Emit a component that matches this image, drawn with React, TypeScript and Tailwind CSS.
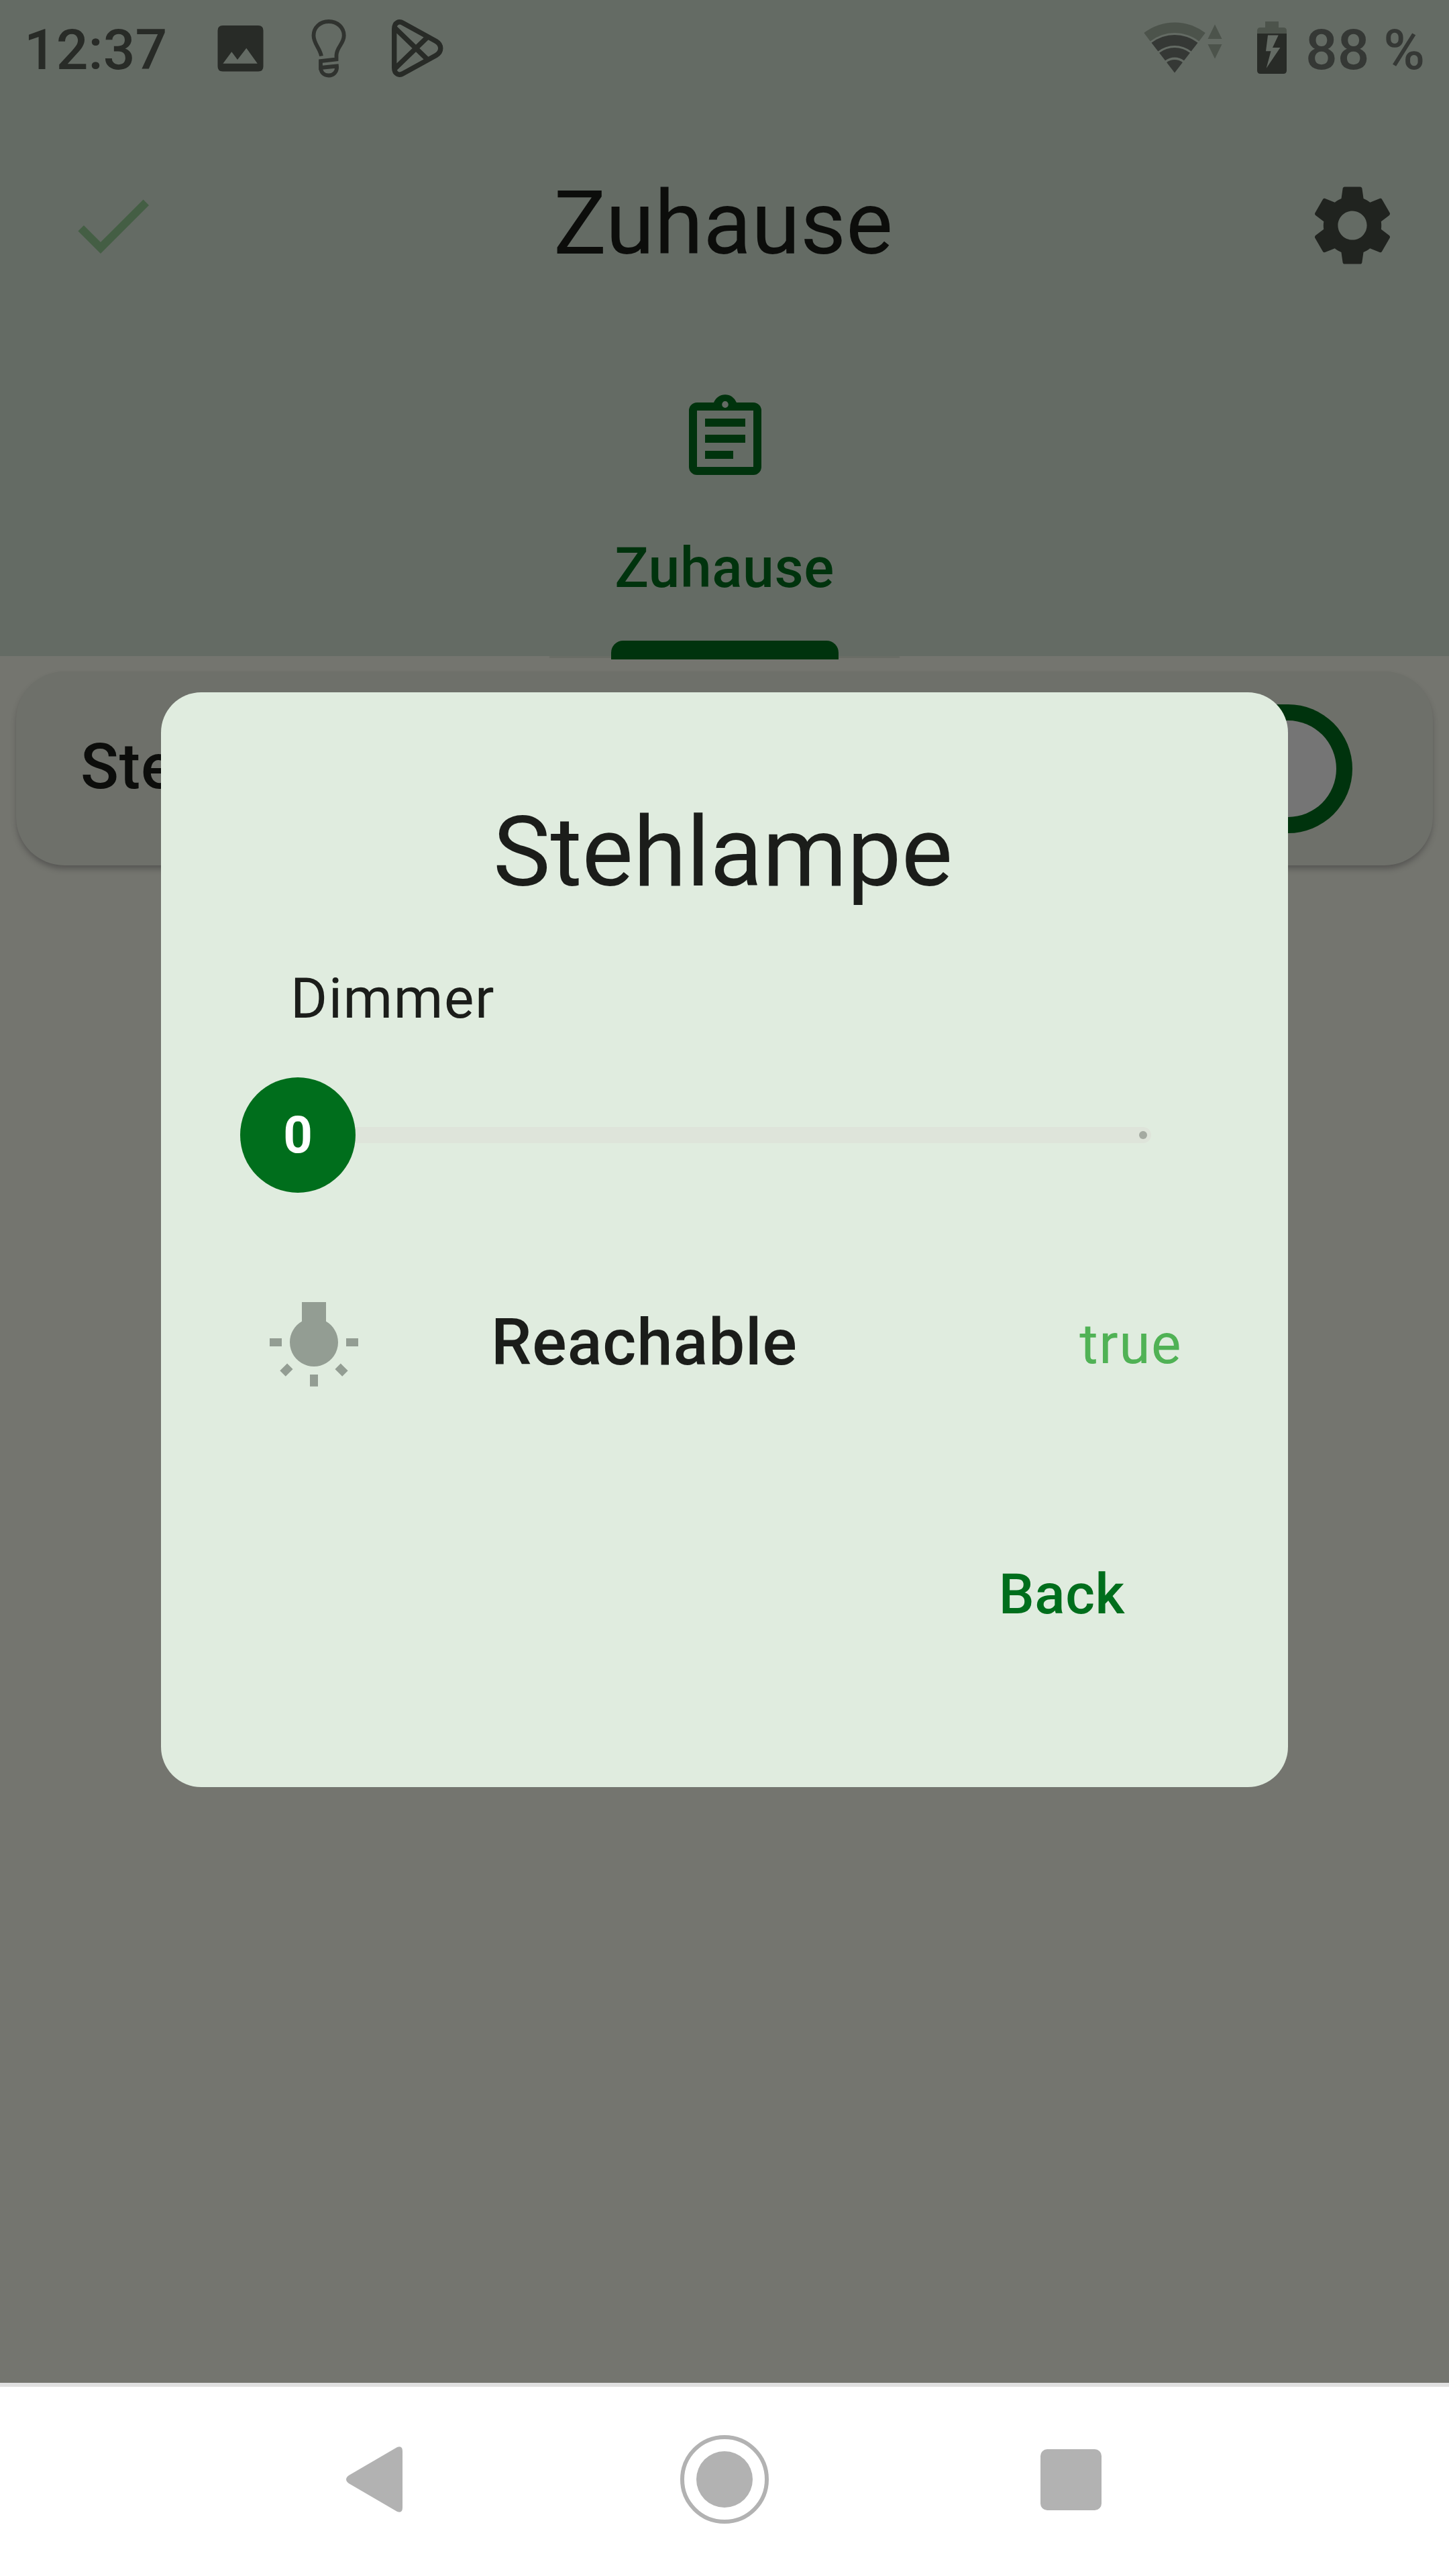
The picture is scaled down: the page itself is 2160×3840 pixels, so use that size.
import React from "react";

const GEAR =
  "M19.14 12.94c.04-.3.06-.61.06-.94 0-.32-.02-.64-.07-.94l2.03-1.58c.18-.14.23-.41.12-.61l-1.92-3.32c-.12-.22-.37-.29-.59-.22l-2.39.96c-.5-.38-1.03-.7-1.62-.94L14.4 2.81c-.04-.24-.24-.41-.48-.41h-3.84c-.24 0-.43.17-.47.41L9.25 5.35C8.66 5.59 8.12 5.92 7.63 6.29L5.24 5.33c-.22-.08-.47 0-.59.22L2.74 8.87c-.12.21-.08.47.12.61l2.03 1.58c-.05.3-.09.63-.09.94s.02.64.07.94l-2.03 1.58c-.18.14-.23.41-.12.61l1.92 3.32c.12.22.37.29.59.22l2.39-.96c.5.38 1.03.7 1.62.94l.36 2.54c.05.24.24.41.48.41h3.84c.24 0 .44-.17.47-.41l.36-2.54c.59-.24 1.13-.56 1.62-.94l2.39.96c.22.08.47 0 .59-.22l1.92-3.32c.12-.22.07-.47-.12-.61l-2.01-1.58zM12 15.6c-1.98 0-3.6-1.62-3.6-3.6s1.62-3.6 3.6-3.6 3.6 1.62 3.6 3.6-1.62 3.6-3.6 3.6z";

const LAMP =
  "M3.55 18.54l1.41 1.41 1.8-1.79-1.41-1.41-1.8 1.79zM11 22.45V19.5h2v2.95h-2zM4 10.5H1v2h3v-2zm11-4.19V1.5H9v4.81C7.21 7.35 6 9.28 6 11.5c0 3.31 2.69 6 6 6s6-2.69 6-6c0-2.22-1.21-4.15-3-5.19zm5 4.19v2h3v-2h-3zm-2.76 7.66l1.79 1.8 1.41-1.41-1.8-1.79-1.4 1.4z";

function StatusBar() {
  return (
    <div className="flex h-[150px] items-center justify-between pl-9 pr-9">
      <div className="flex items-center">
        <span className="w-[268px] text-[84px] font-medium leading-[96px] text-[#282b27]">12:37</span>
        <svg className="h-[150px] w-[380px]" viewBox="304 0 380 150" fill="none">
          <path
            fill="#282b27"
            fillRule="evenodd"
            d="M332 38h53q7.500 0 7.500 7.500v53.500q0 7.500-7.500 7.500h-53q-7.500 0-7.500-7.500v-53.500q0-7.500 7.500-7.500zM332.400 94.700h51.400l-16.500-23-13.300 17.300-8.700-11.700z"
          />
          <path
            stroke="#30332f"
            strokeWidth="5.800"
            d="M479 83.500C477 72 467.500 65 467.500 53C467.500 41 477 32 490 32C503 32 512.700 41 512.700 53C512.700 65 502 70 501.500 82V88.500L478 91V101L502 98.500C503 107 497 112.500 490 112.500C483 112.500 478 108 478 100"
          />
          <path
            stroke="#282b27"
            strokeWidth="7.400"
            d="M587.700 43.500C587.700 33 595 31 601 34.500L650 61.500C659 67 659 77 650 82.500L601 109.500C595 113 587.700 111 587.700 100.500zM589 42L636 87.500M589 102L636 56.500"
          />
        </svg>
      </div>
      <div className="flex items-center">
        <svg className="h-[150px] w-[246px]" viewBox="1700 0 246 150">
          <path fill="#4c534b" d="M1705.300 49.100A75 75 0 0 1 1796.800 49.100L1787.300 61.400A59.500 59.500 0 0 0 1714.700 61.400z" />
          <g fill="#353835">
            <path d="M1716.500 63.800A56.500 56.500 0 0 1 1785.500 63.800L1775.700 76.400A40.500 40.500 0 0 0 1726.300 76.400z" />
            <path d="M1728.100 78.800A37.500 37.500 0 0 1 1773.900 78.800L1765 90.300A23 23 0 0 0 1737 90.300z" />
            <path d="M1739.100 93.100A19.500 19.500 0 0 1 1762.900 93.100L1751 108.500z" />
          </g>
          <path fill="#4c534b" d="M1811 36.500l10.500 21.500h-21zM1811 87.500l10.500-21.500h-21z" />
          <path fill="#4c534b" d="M1886 32h20v9h7q5 0 5 5v4h-44v-4q0-5 5-5h7z" />
          <path
            fill="#282b27"
            fillRule="evenodd"
            d="M1874 50h44v55q0 5-5 5h-34q-5 0-5-5zM1890 52.500l-3 23.800h7.500l-6.800 25.500 20.700-30.800h-11.400l8.700-18.500z"
          />
        </svg>
        <span className="w-[178px] whitespace-nowrap text-[84px] font-medium leading-[96px] text-[#353835]">88 %</span>
      </div>
    </div>
  );
}

function Header() {
  return (
    <header className="relative h-[978px] bg-[#646b64]">
      <StatusBar />
      <div className="flex h-[372px] items-center justify-between pl-24 pr-[72px]">
        <svg className="size-36" viewBox="0 0 24 24" fill="#445e44">
          <path d="M9 16.170L4.830 12l-1.420 1.410L9 19 21 7l-1.410-1.410z" />
        </svg>
        <h1 className="ml-[-28px] pb-[7px] text-[132px] leading-[160px] text-[#0c0d0b]">Zuhause</h1>
        <svg className="size-36" viewBox="0 0 24 24" fill="#20231f">
          <path d={GEAR} />
        </svg>
      </div>
      <div className="mx-auto flex h-[459px] w-[522px] flex-col items-center border-b-[3px] border-[#6a6d66] pt-[60px] text-[#00330d]">
        <svg className="ml-[2px] size-36 shrink-0" viewBox="0 0 24 24" fill="currentColor" fillRule="evenodd">
          <path d="M5 3h4.180a3 3 0 0 1 5.640 0H19a2 2 0 0 1 2 2v14a2 2 0 0 1-2 2H5a2 2 0 0 1-2-2V5a2 2 0 0 1 2-2zM5 5v14h14V5zM12 2.650a.8.850 0 1 0 0 1.700.8.850 0 1 0 0-1.700z" />
          <path d="M7 7h10v2H7zM7 11h10v2H7zM7 15h7v2H7z" />
        </svg>
        <span className="mt-[73px] text-[84px] font-medium leading-[96px] tracking-[0.6px]">Zuhause</span>
        <div className="mt-[60px] h-7 w-[339px] shrink-0 rounded-t-[18px] bg-[#00330d]" />
      </div>
    </header>
  );
}

function DeviceCard() {
  return (
    <div className="mx-6 mt-[23px] flex h-[289px] items-center justify-between rounded-[72px] bg-[#6e706a] pl-[96px] pr-[120px] shadow-[0_6px_8px_-1px_rgba(50,48,50,0.45)]">
      <span className="pb-[6px] text-[94px] font-medium leading-[112px] tracking-[0.9px] text-[#0c0d0b]">Stehlampe</span>
      <div className="mt-px flex h-48 w-[312px] items-center justify-end rounded-full bg-[#00330d] pr-6">
        <div className="size-36 rounded-full bg-[#757575]" />
      </div>
    </div>
  );
}

function LampDialog() {
  return (
    <section className="absolute left-[240px] top-[1032px] h-[1632px] w-[1680px] rounded-[60px] bg-[#e0ecdf] text-[#1b1d1a]">
      <h2 className="pr-[5px] pt-[155px] text-center text-[144px] leading-[168px]">Stehlampe</h2>
      <p className="ml-[193px] mt-[86px] text-[84px] leading-[96px] tracking-[1.5px]">Dimmer</p>
      <div className="ml-[192px] mt-[143px] flex h-6 w-[1284px] items-center justify-between rounded-full bg-[#dee4da] pr-[6px]">
        <div className="ml-[-74px] flex size-[172px] shrink-0 items-center justify-center rounded-full bg-[#006e1c] text-[76px] font-bold leading-none text-white">
          0
        </div>
        <div className="size-3 rounded-full bg-[#a4aaa1]" />
      </div>
      <div className="ml-[156px] mr-[158px] mt-[228px] flex h-36 items-center">
        <svg className="size-36" viewBox="0 0 24 24" fill="#939d93">
          <path d={LAMP} />
        </svg>
        <span className="ml-[192px] pb-[6px] text-[96px] font-medium leading-[112px] tracking-[0.9px]">Reachable</span>
        <span className="ml-auto text-[84px] leading-[96px] tracking-[1.5px] text-[#50b255]">true</span>
      </div>
      <div className="mr-[243px] mt-[253px] text-right text-[84px] font-medium leading-[96px] tracking-[0.6px] text-[#006e1c]">
        Back
      </div>
    </section>
  );
}

function NavigationBar() {
  return (
    <nav className="flex h-[288px] items-center border-t-[6px] border-[#e0e0e0] bg-white pb-[6px] pl-[516px]">
      <svg className="h-[100px] w-[84px]" viewBox="0 0 84 100" fill="#b2b2b2">
        <path d="M76 2Q84-1 84 8V92Q84 101 76 98L4 56Q-4 50 4 44z" />
      </svg>
      <div className="ml-[414px] flex size-[132px] items-center justify-center rounded-full border-[6px] border-[#b2b2b2]">
        <div className="size-[84px] rounded-full bg-[#b2b2b2]" />
      </div>
      <div className="ml-[405px] size-[91px] rounded-[10px] bg-[#b2b2b2]" />
    </nav>
  );
}

export default function App() {
  return (
    <div className="relative flex h-[3840px] w-[2160px] flex-col overflow-hidden bg-[#74756f] font-['Roboto',sans-serif]">
      <Header />
      <main className="flex-1">
        <DeviceCard />
      </main>
      <NavigationBar />
      <LampDialog />
    </div>
  );
}
